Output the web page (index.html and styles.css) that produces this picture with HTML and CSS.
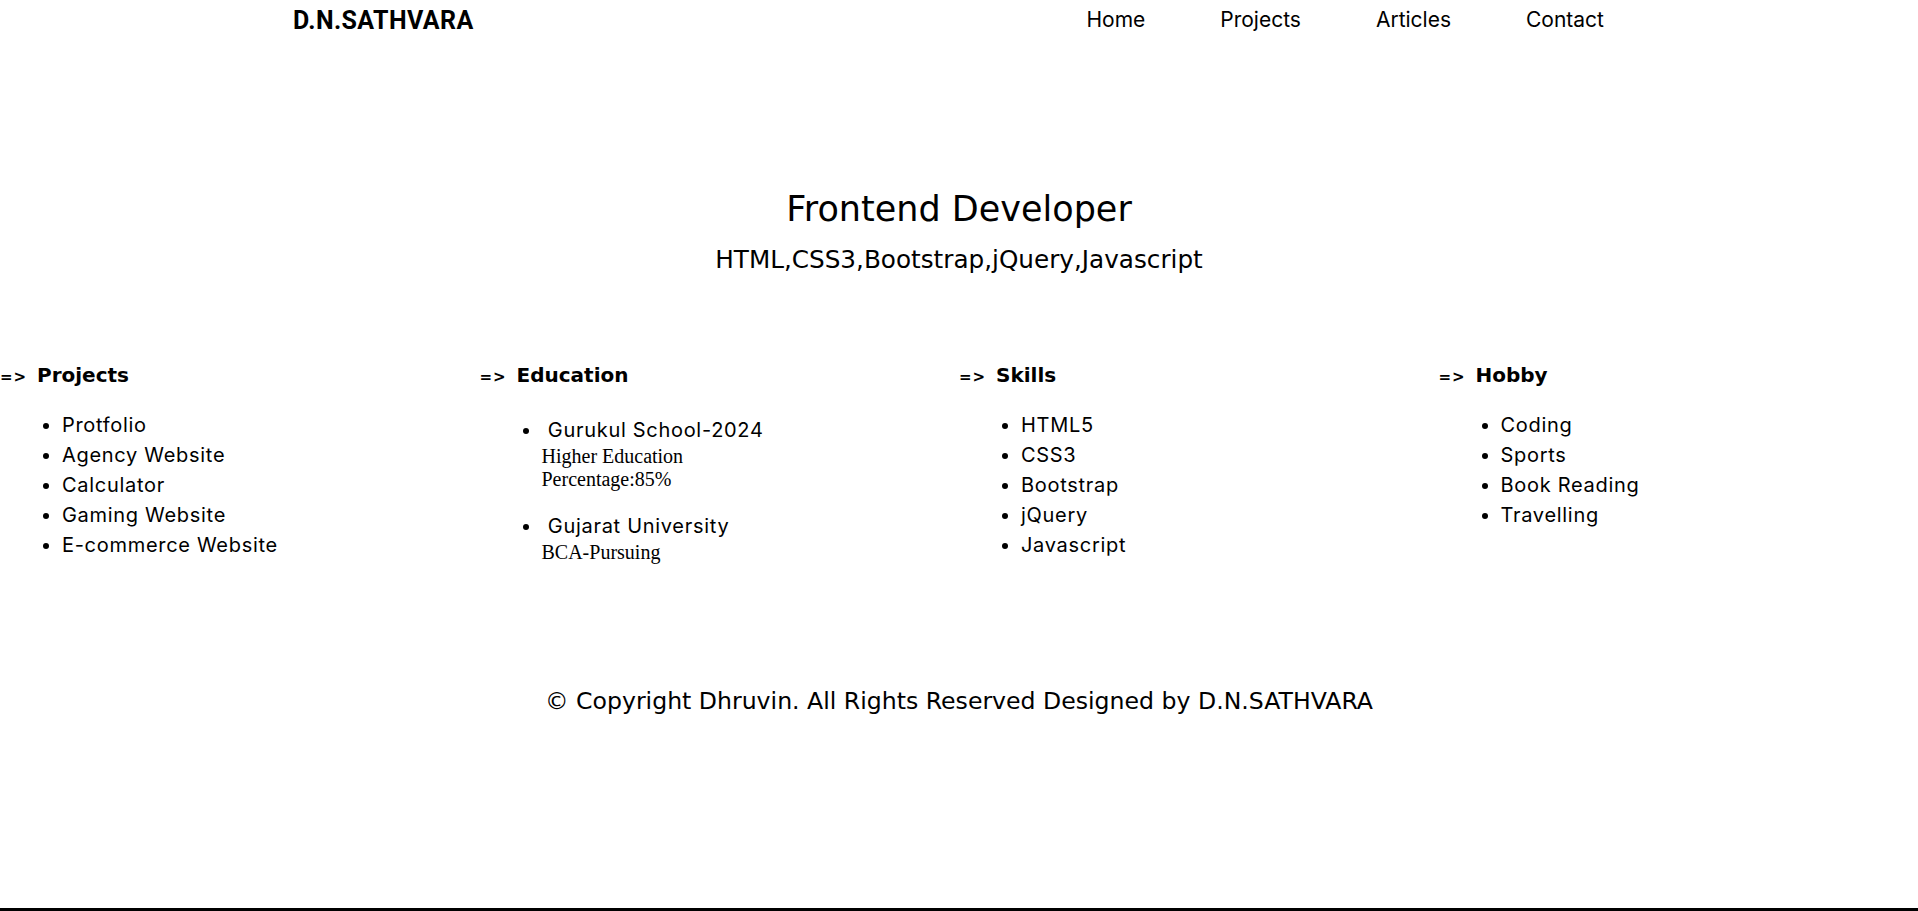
FILE: index.html
```html
<!DOCTYPE html>
<html lang="en">
<head>
<meta charset="utf-8">
<title>D.N.SATHVARA</title>
<link rel="stylesheet" href="styles.css">
</head>
<body>
<div class="page">
  <header class="topbar">
    <div class="logo">D.N.SATHVARA</div>
    <nav>
      <ul class="menu">
        <li><a href="#">Home</a></li>
        <li><a href="#">Projects</a></li>
        <li><a href="#">Articles</a></li>
        <li><a href="#">Contact</a></li>
      </ul>
    </nav>
  </header>

  <section class="hero">
    <h1 class="hero-title">Frontend Developer</h1>
    <p class="hero-sub">HTML,CSS3,Bootstrap,jQuery,Javascript</p>
  </section>

  <section class="columns">
    <div class="col">
      <h3 class="col-head"><span class="arrow">=&gt;</span> Projects</h3>
      <ul class="items">
        <li>Protfolio</li>
        <li>Agency Website</li>
        <li>Calculator</li>
        <li>Gaming Website</li>
        <li>E-commerce Website</li>
      </ul>
    </div>
    <div class="col">
      <h3 class="col-head"><span class="arrow">=&gt;</span> Education</h3>
      <ul class="items edu">
        <li>&nbsp;Gurukul School-2024
          <div class="edu-detail">Higher Education<br>Percentage:85%</div>
        </li>
        <li>&nbsp;Gujarat University
          <div class="edu-detail">BCA-Pursuing</div>
        </li>
      </ul>
    </div>
    <div class="col">
      <h3 class="col-head"><span class="arrow">=&gt;</span> Skills</h3>
      <ul class="items">
        <li>HTML5</li>
        <li>CSS3</li>
        <li>Bootstrap</li>
        <li>jQuery</li>
        <li>Javascript</li>
      </ul>
    </div>
    <div class="col">
      <h3 class="col-head"><span class="arrow">=&gt;</span> Hobby</h3>
      <ul class="items">
        <li>Coding</li>
        <li>Sports</li>
        <li>Book Reading</li>
        <li>Travelling</li>
      </ul>
    </div>
  </section>

  <footer class="footer">
    <p class="copy">&copy; Copyright Dhruvin. All Rights Reserved Designed by D.N.SATHVARA</p>
  </footer>
</div>
</body>
</html>
```

FILE: styles.css
```css
* {
  box-sizing: border-box;
}

html, body {
  margin: 0;
  padding: 0;
  background: #fff;
  color: #000;
}

.page {
  min-height: 100vh;
  display: flex;
  flex-direction: column;
  border-bottom: 3px solid #000;
}

.topbar {
  display: flex;
  align-items: flex-start;
  justify-content: space-between;
  padding: 5px 314px 0 293px;
  height: 40px;
}

.logo {
  font-family: Roboto, "Liberation Sans", sans-serif;
  font-weight: 700;
  font-size: 25px;
  line-height: 29px;
  letter-spacing: 0.4px;
  margin-top: 1px;
}

.menu {
  list-style: none;
  margin: 0;
  padding: 0;
  display: flex;
  gap: 75px;
}

.menu a {
  font-family: Inter, "Noto Sans", sans-serif;
  font-size: 21px;
  line-height: 30px;
  letter-spacing: 0;
  color: #000;
  text-decoration: none;
  display: block;
  margin-top: 0;
}

.hero {
  text-align: center;
  padding-top: 149px;
}

.hero-title {
  font-family: "Comic Sans MS", "DejaVu Sans", sans-serif;
  font-weight: 400;
  font-size: 35px;
  line-height: 40px;
  margin: 0;
}

.hero-sub {
  font-family: "Comic Sans MS", "DejaVu Sans", sans-serif;
  font-size: 24.7px;
  line-height: 28px;
  margin: 17px 0 0;
}

.columns {
  display: grid;
  grid-template-columns: repeat(4, 1fr);
  margin-top: 89px;
}

.col-head {
  font-family: "Comic Sans MS", "DejaVu Sans", sans-serif;
  font-weight: 700;
  font-size: 20px;
  line-height: 24px;
  margin: 0;
  display: flex;
  align-items: baseline;
}

.arrow {
  font-size: 15px;
  letter-spacing: 1px;
  width: 37px;
  flex: none;
}

.items {
  font-family: Inter, "Noto Sans", sans-serif;
  font-size: 20px;
  line-height: 30px;
  letter-spacing: 0.7px;
  margin: 21px 0 0;
  padding-left: 62px;
}

.items.edu {
  margin-top: 26px;
}

.edu li + li {
  margin-top: 20px;
}

.edu-detail {
  font-family: "Liberation Serif", "Times New Roman", serif;
  font-size: 20px;
  line-height: 23px;
  letter-spacing: 0;
}

.footer {
  text-align: center;
  margin-top: 123px;
}

.copy {
  font-family: "Comic Sans MS", "DejaVu Sans", sans-serif;
  font-size: 23.6px;
  line-height: 28px;
  margin: 0;
}
```
